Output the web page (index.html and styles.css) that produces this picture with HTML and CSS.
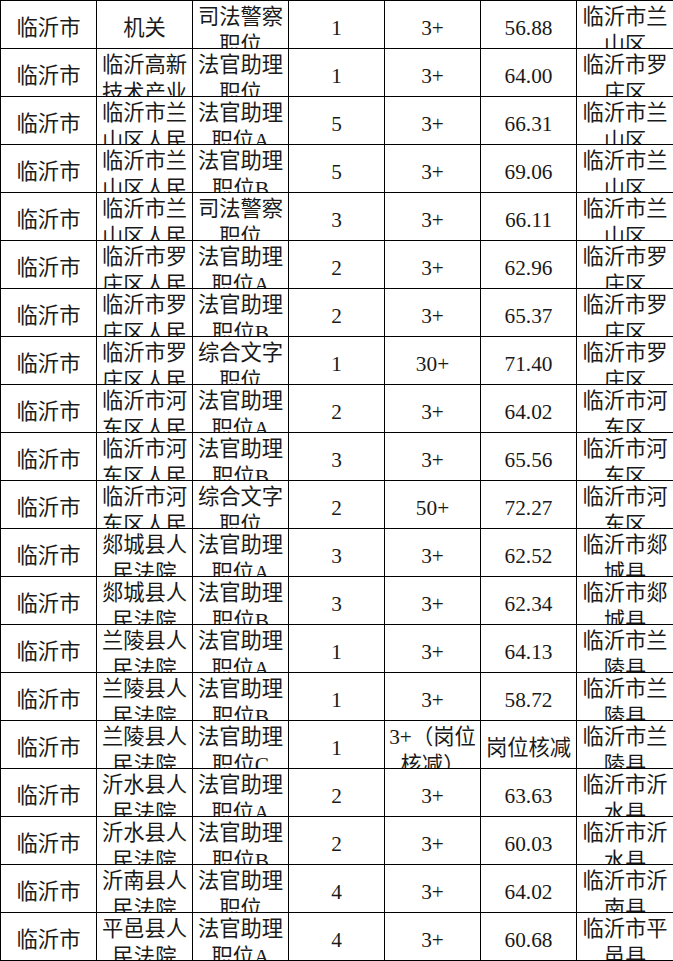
FILE: index.html
```html
<!DOCTYPE html>
<html lang="zh-CN">
<head>
<meta charset="utf-8">
<title>临沂市 岗位表</title>
<link rel="stylesheet" href="styles.css">
</head>
<body>
<div class="sheet">
  <div class="c">临沂市</div><div class="c">机关</div><div class="c w">司法警察职位</div><div class="c">1</div><div class="c">3+</div><div class="c">56.88</div><div class="c w">临沂市兰山区</div>
  <div class="c">临沂市</div><div class="c w">临沂高新技术产业</div><div class="c w">法官助理职位</div><div class="c">1</div><div class="c">3+</div><div class="c">64.00</div><div class="c w">临沂市罗庄区</div>
  <div class="c">临沂市</div><div class="c w">临沂市兰山区人民</div><div class="c w">法官助理职位A</div><div class="c">5</div><div class="c">3+</div><div class="c">66.31</div><div class="c w">临沂市兰山区</div>
  <div class="c">临沂市</div><div class="c w">临沂市兰山区人民</div><div class="c w">法官助理职位B</div><div class="c">5</div><div class="c">3+</div><div class="c">69.06</div><div class="c w">临沂市兰山区</div>
  <div class="c">临沂市</div><div class="c w">临沂市兰山区人民</div><div class="c w">司法警察职位</div><div class="c">3</div><div class="c">3+</div><div class="c">66.11</div><div class="c w">临沂市兰山区</div>
  <div class="c">临沂市</div><div class="c w">临沂市罗庄区人民</div><div class="c w">法官助理职位A</div><div class="c">2</div><div class="c">3+</div><div class="c">62.96</div><div class="c w">临沂市罗庄区</div>
  <div class="c">临沂市</div><div class="c w">临沂市罗庄区人民</div><div class="c w">法官助理职位B</div><div class="c">2</div><div class="c">3+</div><div class="c">65.37</div><div class="c w">临沂市罗庄区</div>
  <div class="c">临沂市</div><div class="c w">临沂市罗庄区人民</div><div class="c w">综合文字职位</div><div class="c">1</div><div class="c">30+</div><div class="c">71.40</div><div class="c w">临沂市罗庄区</div>
  <div class="c">临沂市</div><div class="c w">临沂市河东区人民</div><div class="c w">法官助理职位A</div><div class="c">2</div><div class="c">3+</div><div class="c">64.02</div><div class="c w">临沂市河东区</div>
  <div class="c">临沂市</div><div class="c w">临沂市河东区人民</div><div class="c w">法官助理职位B</div><div class="c">3</div><div class="c">3+</div><div class="c">65.56</div><div class="c w">临沂市河东区</div>
  <div class="c">临沂市</div><div class="c w">临沂市河东区人民</div><div class="c w">综合文字职位</div><div class="c">2</div><div class="c">50+</div><div class="c">72.27</div><div class="c w">临沂市河东区</div>
  <div class="c">临沂市</div><div class="c w">郯城县人民法院</div><div class="c w">法官助理职位A</div><div class="c">3</div><div class="c">3+</div><div class="c">62.52</div><div class="c w">临沂市郯城县</div>
  <div class="c">临沂市</div><div class="c w">郯城县人民法院</div><div class="c w">法官助理职位B</div><div class="c">3</div><div class="c">3+</div><div class="c">62.34</div><div class="c w">临沂市郯城县</div>
  <div class="c">临沂市</div><div class="c w">兰陵县人民法院</div><div class="c w">法官助理职位A</div><div class="c">1</div><div class="c">3+</div><div class="c">64.13</div><div class="c w">临沂市兰陵县</div>
  <div class="c">临沂市</div><div class="c w">兰陵县人民法院</div><div class="c w">法官助理职位B</div><div class="c">1</div><div class="c">3+</div><div class="c">58.72</div><div class="c w">临沂市兰陵县</div>
  <div class="c">临沂市</div><div class="c w">兰陵县人民法院</div><div class="c w">法官助理职位C</div><div class="c">1</div><div class="c w">3+（岗位核减）</div><div class="c">岗位核减</div><div class="c w">临沂市兰陵县</div>
  <div class="c">临沂市</div><div class="c w">沂水县人民法院</div><div class="c w">法官助理职位A</div><div class="c">2</div><div class="c">3+</div><div class="c">63.63</div><div class="c w">临沂市沂水县</div>
  <div class="c">临沂市</div><div class="c w">沂水县人民法院</div><div class="c w">法官助理职位B</div><div class="c">2</div><div class="c">3+</div><div class="c">60.03</div><div class="c w">临沂市沂水县</div>
  <div class="c">临沂市</div><div class="c w">沂南县人民法院</div><div class="c w">法官助理职位</div><div class="c">4</div><div class="c">3+</div><div class="c">64.02</div><div class="c w">临沂市沂南县</div>
  <div class="c">临沂市</div><div class="c w">平邑县人民法院</div><div class="c w">法官助理职位A</div><div class="c">4</div><div class="c">3+</div><div class="c">60.68</div><div class="c w">临沂市平邑县</div>
</div>
</body>
</html>
```

FILE: styles.css
```css
html, body {
  margin: 0;
  padding: 0;
  background: #fff;
  overflow: hidden;
}

.sheet {
  display: grid;
  grid-template-columns: repeat(6, 95px) 96px;
  grid-auto-rows: 47px;
  gap: 1px;
  padding: 1px 0 1px 1px;
  background: #000;
  width: max-content;
}

.c {
  background: #fff;
  overflow: hidden;
  box-sizing: border-box;
  padding-top: 13px;
  text-align: center;
  font-family: "Liberation Serif", "Noto Sans CJK SC", serif;
  font-size: 21.3px;
  line-height: 28px;
  color: #1a1a1a;
}

.c.w {
  padding-top: 2px;
}
```
